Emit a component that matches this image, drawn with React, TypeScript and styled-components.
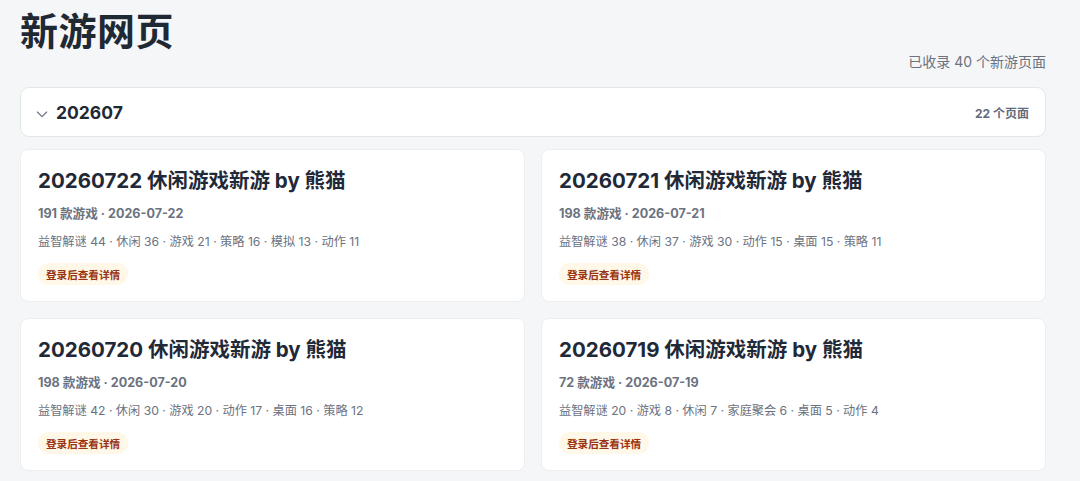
import React from 'react';
import styled, { createGlobalStyle } from 'styled-components';

const GlobalStyle = createGlobalStyle`
  html, body {
    margin: 0;
    padding: 0;
    background: #f5f6f8;
  }
  body {
    font-family: Inter, "Noto Sans CJK SC", "Noto Sans", sans-serif;
    color: #1f2933;
  }
`;

interface PageEntry {
  id: string;
  count: number;
  date: string;
  tags: [string, number][];
}

const pages: PageEntry[] = [
  {
    id: '20260722',
    count: 191,
    date: '2026-07-22',
    tags: [['益智解谜', 44], ['休闲', 36], ['游戏', 21], ['策略', 16], ['模拟', 13], ['动作', 11]],
  },
  {
    id: '20260721',
    count: 198,
    date: '2026-07-21',
    tags: [['益智解谜', 38], ['休闲', 37], ['游戏', 30], ['动作', 15], ['桌面', 15], ['策略', 11]],
  },
  {
    id: '20260720',
    count: 198,
    date: '2026-07-20',
    tags: [['益智解谜', 42], ['休闲', 30], ['游戏', 20], ['动作', 17], ['桌面', 16], ['策略', 12]],
  },
  {
    id: '20260719',
    count: 72,
    date: '2026-07-19',
    tags: [['益智解谜', 20], ['游戏', 8], ['休闲', 7], ['家庭聚会', 6], ['桌面', 5], ['动作', 4]],
  },
];

const Page = styled.div`
  padding: 9px 34px 0 20px;
`;

const Title = styled.h1`
  margin: 0;
  font-size: 38px;
  line-height: 44px;
  font-weight: 700;
  color: #1f2933;
  letter-spacing: 0.5px;
`;

const Summary = styled.div`
  text-align: right;
  font-size: 14px;
  line-height: 18px;
  color: #6b7280;
`;

const Group = styled.section`
  margin-top: 16px;
`;

const GroupHeader = styled.div`
  display: flex;
  align-items: center;
  height: 48px;
  padding: 0 16px 0 13px;
  background: #ffffff;
  border: 1px solid #e1e8e8;
  border-radius: 9px;
`;

const Chevron = styled.svg`
  width: 16px;
  height: 16px;
  margin-right: 6px;
  margin-top: 3px;
  color: #6b7280;
`;

const GroupName = styled.div`
  font-size: 17.5px;
  font-weight: 700;
  color: #1f2933;
  flex: 1;
`;

const GroupCount = styled.div`
  font-size: 12px;
  font-weight: 700;
  color: #5f6b7a;
`;

const Grid = styled.div`
  display: grid;
  grid-template-columns: 1fr 1fr;
  gap: 16px;
  margin-top: 12px;
`;

const Card = styled.article`
  background: #ffffff;
  border: 1px solid #eceef1;
  border-radius: 8px;
  padding: 17px 18px 16px 17px;
`;

const CardTitle = styled.h2`
  margin: 0;
  font-size: 20.5px;
  line-height: 28px;
  font-weight: 700;
  color: #1f2937;
`;

const Meta = styled.div`
  margin-top: 10px;
  font-size: 12.6px;
  line-height: 18px;
  font-weight: 700;
  color: #6b7280;
`;

const Tags = styled.div`
  margin-top: 10px;
  font-size: 12.2px;
  line-height: 18px;
  color: #6b7280;
`;

const Badge = styled.span`
  display: inline-flex;
  align-items: center;
  margin-top: 12px;
  height: 22px;
  padding: 0 8px;
  border-radius: 11px;
  background: #fff8e8;
  color: #9a3412;
  font-size: 10.6px;
  font-weight: 700;
`;

export default function App() {
  return (
    <>
      <GlobalStyle />
      <Page>
        <Title>新游网页</Title>
        <Summary>已收录 40 个新游页面</Summary>
        <Group>
          <GroupHeader>
            <Chevron viewBox="0 0 24 24" fill="none" stroke="currentColor" strokeWidth="1.75" strokeLinecap="round" strokeLinejoin="round">
              <path d="M5 9l7 7 7-7" />
            </Chevron>
            <GroupName>202607</GroupName>
            <GroupCount>22 个页面</GroupCount>
          </GroupHeader>
          <Grid>
            {pages.map((p) => (
              <Card key={p.id}>
                <CardTitle>{p.id} 休闲游戏新游 by 熊猫</CardTitle>
                <Meta>
                  {p.count} 款游戏 · {p.date}
                </Meta>
                <Tags>{p.tags.map(([name, n]) => `${name} ${n}`).join(' · ')}</Tags>
                <div>
                  <Badge>登录后查看详情</Badge>
                </div>
              </Card>
            ))}
          </Grid>
        </Group>
      </Page>
    </>
  );
}
